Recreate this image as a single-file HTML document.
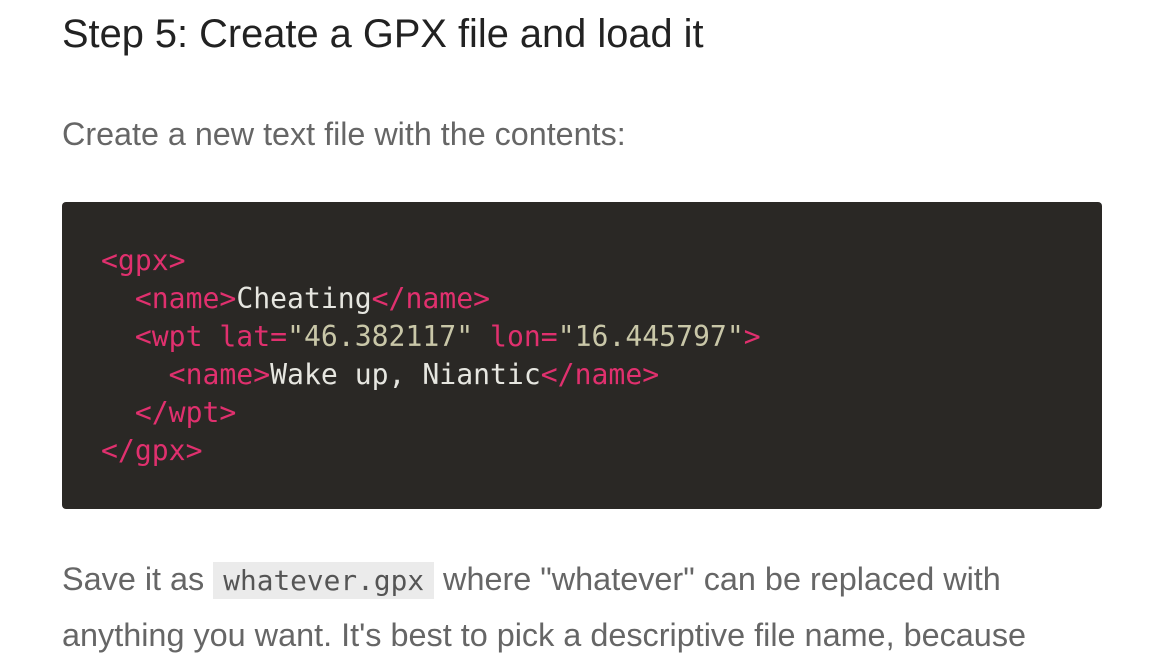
<!DOCTYPE html>
<html><head><meta charset="utf-8"><style>
html,body{margin:0;padding:0;background:#fff;width:1160px;height:670px;overflow:hidden}
body{font-family:"Liberation Sans",sans-serif;position:relative}
h2{position:absolute;left:62px;top:11px;margin:0;font-weight:400;font-size:39.8px;color:#222;line-height:46px;white-space:nowrap}
.p1{position:absolute;left:62px;top:114px;margin:0;font-size:32.3px;color:#666;line-height:40px;white-space:nowrap}
pre{position:absolute;left:62px;top:202px;width:1040px;height:307px;margin:0;background:#2a2825;border-radius:4px;box-sizing:border-box;padding:40px 0 0 39px;font-family:"DejaVu Sans Mono","Liberation Mono",monospace;font-size:28.1px;line-height:38px;color:#e6e6e0;white-space:pre}
.t{color:#e0306e}.s{color:#c9c7a8}
.p2{position:absolute;left:62px;top:552px;margin:0;font-size:32.4px;color:#666;line-height:54px;width:1100px;white-space:nowrap}
code{font-family:"DejaVu Sans Mono","Liberation Mono",monospace;font-size:27.8px;background:#ebebeb;padding:2px 10px;color:#555}
</style></head><body>
<h2>Step 5: Create a GPX file and load it</h2>
<p class="p1">Create a new text file with the contents:</p>
<pre><span class="t">&lt;gpx&gt;</span>
  <span class="t">&lt;name&gt;</span>Cheating<span class="t">&lt;/name&gt;</span>
  <span class="t">&lt;wpt lat=</span><span class="s">"46.382117"</span> <span class="t">lon=</span><span class="s">"16.445797"</span><span class="t">&gt;</span>
    <span class="t">&lt;name&gt;</span>Wake up, Niantic<span class="t">&lt;/name&gt;</span>
  <span class="t">&lt;/wpt&gt;</span>
<span class="t">&lt;/gpx&gt;</span></pre>
<p class="p2">Save it as <code>whatever.gpx</code> where "whatever" can be replaced with<br>anything you want. It's best to pick a descriptive file name, because</p>
</body></html>
